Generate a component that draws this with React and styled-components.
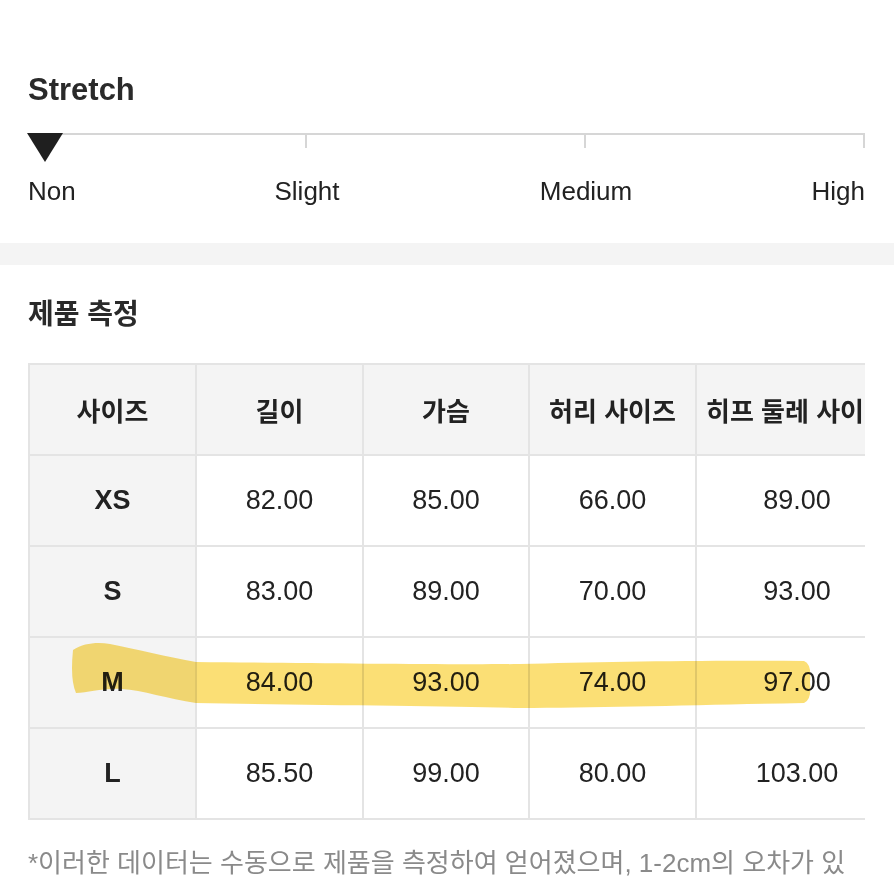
import styled, { createGlobalStyle } from "styled-components";

const GlobalStyle = createGlobalStyle`
    html, body {
        margin: 0;
        padding: 0;
        background: #fff;
    }
    body {
        font-family: "Liberation Sans", "Noto Sans CJK KR", sans-serif;
        color: #222;
    }
`;

const Page = styled.div`
    width: 894px;
    height: 894px;
    overflow: hidden;
`;

const StretchSection = styled.section`
    padding: 72px 29px 37px 28px;
`;

const Title = styled.h2`
    margin: 0;
    font-size: ${(p) => p.size}px;
    line-height: ${(p) => p.lh}px;
    font-weight: 700;
    color: #2a2a2a;
`;

const Track = styled.div`
    position: relative;
    display: flex;
    margin-top: 25px;
    border-top: 2px solid #d6d6d6;
`;

const Segment = styled.div`
    flex: 1;
    height: 13px;
    border-right: 2px solid #d6d6d6;
`;

const Marker = styled.div`
    position: absolute;
    left: -1px;
    top: -2px;
    width: 0;
    height: 0;
    border-left: 18px solid transparent;
    border-right: 18px solid transparent;
    border-top: 29px solid #1f1f1f;
`;

const Labels = styled.div`
    display: flex;
    justify-content: space-between;
    margin-top: 28px;
`;

const Label = styled.div`
    width: 0;
    display: flex;
    justify-content: ${(p) => p.align};
    white-space: nowrap;
    font-size: 26px;
    line-height: 30px;
    color: #222;
`;

const Band = styled.div`
    height: 22px;
    background: #f4f4f4;
`;

const MeasureSection = styled.section`
    padding: 32px 0 0 28px;
`;

const TableWrap = styled.div`
    position: relative;
    width: 837px;
    margin-top: 30px;
    overflow: hidden;
`;

const Grid = styled.div`
    display: grid;
    grid-template-columns: 165px 165px 164px 165px 200px;
    grid-auto-rows: 89px;
    gap: 2px;
    padding: 2px;
    width: max-content;
    background: #e4e4e4;
`;

const Cell = styled.div`
    display: flex;
    align-items: center;
    justify-content: center;
    white-space: nowrap;
    overflow: hidden;
    background: ${(p) => (p.shaded ? "#f4f4f4" : "#fff")};
    font-size: ${(p) => (p.head ? 26 : 27)}px;
    font-weight: ${(p) => (p.head || p.bold ? 700 : 400)};
    color: #222;
`;

const Highlight = styled.svg`
    position: absolute;
    top: 0;
    left: 0;
    pointer-events: none;
    mix-blend-mode: multiply;
`;

const Note = styled.p`
    margin: 21px 29px 0 0;
    font-size: 26px;
    line-height: 44px;
    color: #8a8a8a;
`;

const headers = ["사이즈", "길이", "가슴", "허리 사이즈", "히프 둘레 사이즈"];
const rows = [
    ["XS", "82.00", "85.00", "66.00", "89.00"],
    ["S", "83.00", "89.00", "70.00", "93.00"],
    ["M", "84.00", "93.00", "74.00", "97.00"],
    ["L", "85.50", "99.00", "80.00", "103.00"],
];

const stretchLevels = [
    { name: "Non", align: "flex-start" },
    { name: "Slight", align: "center" },
    { name: "Medium", align: "center" },
    { name: "High", align: "flex-end" },
];

const App = () => {
    return (
        <>
            <GlobalStyle />
            <Page>
                <StretchSection>
                    <Title size={31} lh={36}>Stretch</Title>
                    <Track>
                        <Segment />
                        <Segment />
                        <Segment />
                        <Marker />
                    </Track>
                    <Labels>
                        {stretchLevels.map((l) => (
                            <Label key={l.name} align={l.align}>{l.name}</Label>
                        ))}
                    </Labels>
                </StretchSection>
                <Band />
                <MeasureSection>
                    <Title size={28} lh={36}>제품 측정</Title>
                    <TableWrap>
                        <Grid>
                            {headers.map((h) => (
                                <Cell key={h} head shaded>{h}</Cell>
                            ))}
                            {rows.map((r) =>
                                r.map((v, i) => (
                                    <Cell key={r[0] + i} bold={i === 0} shaded={i === 0}>{v}</Cell>
                                ))
                            )}
                        </Grid>
                        {/* marker stroke over the M row */}
                        <Highlight width="837" height="457" viewBox="28 363 837 457">
                            <path
                                d="M73,650 C84,643 97,642 110,644 C135,649 168,657 196,662 C300,663 450,665 520,664 C600,662 700,660 804,661 Q812,664 810,682 Q812,700 804,703 C700,705 600,708 520,708 C450,706 300,705 196,703 C168,699 142,690 122,689 C102,688 88,693 76,693 Q70,680 73,650 Z"
                                fill="#fadb62"
                                opacity="0.88"
                            />
                        </Highlight>
                    </TableWrap>
                    <Note>*이러한 데이터는 수동으로 제품을 측정하여 얻어졌으며, 1-2cm의 오차가 있을 수 있습니다.</Note>
                </MeasureSection>
            </Page>
        </>
    );
};

export default App;
